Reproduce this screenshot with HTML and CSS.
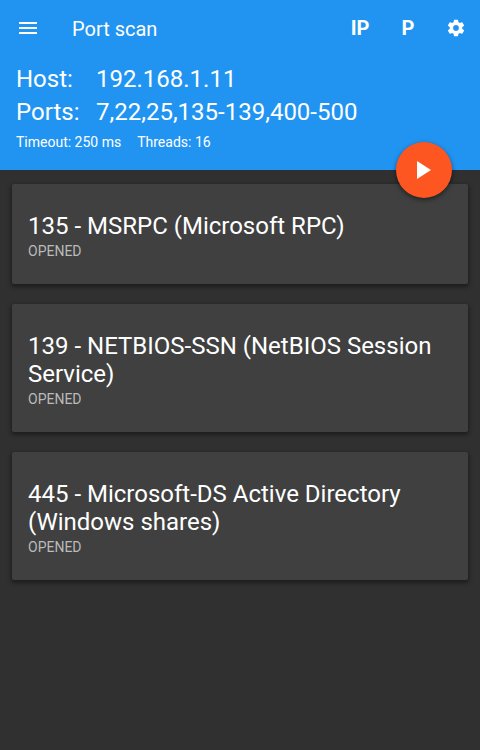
FILE: index.html
```html
<!DOCTYPE html>
<html lang="en">
<head>
<meta charset="utf-8">
<meta name="viewport" content="width=device-width, initial-scale=1">
<title>Port scan</title>
<link rel="stylesheet" href="styles.css">
</head>
<body>
<header class="header">
  <div class="toolbar">
    <button class="icon-button menu" aria-label="Open menu">
      <svg width="24" height="24" viewBox="0 0 24 24" fill="currentColor"><path d="M3 18h18v-2H3v2zm0-5h18v-2H3v2zm0-7v2h18V6H3z"/></svg>
    </button>
    <h1 class="title">Port scan</h1>
    <button class="icon-button action">IP</button>
    <button class="icon-button action">P</button>
    <button class="icon-button action" aria-label="Settings">
      <svg width="20" height="20" viewBox="0 0 24 24" fill="currentColor"><path d="M19.43 12.98c.04-.32.07-.64.07-.98s-.03-.66-.07-.98l2.11-1.65c.19-.15.24-.42.12-.64l-2-3.46c-.12-.22-.39-.3-.61-.22l-2.49 1c-.52-.4-1.08-.73-1.69-.98l-.38-2.65C14.46 2.18 14.25 2 14 2h-4c-.25 0-.46.18-.49.42l-.38 2.65c-.61.25-1.17.59-1.69.98l-2.49-1c-.23-.09-.49 0-.61.22l-2 3.46c-.13.22-.07.49.12.64l2.11 1.65c-.04.32-.07.65-.07.98s.03.66.07.98l-2.11 1.65c-.19.15-.24.42-.12.64l2 3.46c.12.22.39.3.61.22l2.49-1c.52.4 1.08.73 1.69.98l.38 2.65c.03.24.24.42.49.42h4c.25 0 .46-.18.49-.42l.38-2.65c.61-.25 1.17-.59 1.69-.98l2.49 1c.23.09.49 0 .61-.22l2-3.46c.12-.22.07-.49-.12-.64l-2.11-1.65zM12 15.5c-1.93 0-3.5-1.57-3.5-3.5s1.57-3.5 3.5-3.5 3.5 1.57 3.5 3.5-1.57 3.5-3.5 3.5z"/></svg>
    </button>
  </div>
  <dl class="target">
    <dt>Host:</dt><dd>192.168.1.11</dd>
    <dt>Ports:</dt><dd>7,22,25,135-139,400-500</dd>
  </dl>
  <p class="options"><span>Timeout: 250 ms</span><span>Threads: 16</span></p>
  <button class="fab" aria-label="Start scan">
    <svg width="28" height="28" viewBox="0 0 28 28" fill="currentColor"><path d="M7 5v18l14-9z"/></svg>
  </button>
</header>
<main class="results">
  <article class="card"><h2>135 - MSRPC (Microsoft RPC)</h2><p>OPENED</p></article>
  <article class="card"><h2>139 - NETBIOS-SSN (NetBIOS Session Service)</h2><p>OPENED</p></article>
  <article class="card"><h2>445 - Microsoft-DS Active Directory (Windows shares)</h2><p>OPENED</p></article>
</main>
</body>
</html>
```

FILE: styles.css
```css
* {
  box-sizing: border-box;
}

body {
  margin: 0;
  min-height: 100vh;
  background: #303030;
  color: #fff;
  font-family: Roboto, "Liberation Sans", sans-serif;
}

h1, h2, p, dl, dd {
  margin: 0;
  font-weight: 400;
}

button {
  padding: 0;
  border: 0;
  background: none;
  color: inherit;
  font: inherit;
  cursor: pointer;
}

.header {
  position: relative;
  padding-bottom: 19px;
  background: #2194f1;
}

.toolbar {
  display: flex;
  align-items: center;
  height: 56px;
}

.icon-button {
  display: flex;
  align-items: center;
  justify-content: center;
  width: 48px;
  height: 48px;
}

.menu {
  width: 56px;
}

.title {
  flex: 1;
  padding: 2px 0 0 16px;
  font-size: 20px;
  line-height: 24px;
}

.action {
  font-size: 20px;
  font-weight: 700;
}

.target {
  display: grid;
  grid-template-columns: 80px 1fr;
  row-gap: 1px;
  margin-top: 7px;
  padding: 0 16px;
  font-size: 24px;
  line-height: 32px;
}

.options {
  display: flex;
  gap: 16px;
  margin-top: 5px;
  padding: 0 16px;
  font-size: 14px;
  line-height: 18px;
}

.fab {
  position: absolute;
  right: 28px;
  bottom: -28px;
  display: flex;
  align-items: center;
  justify-content: center;
  width: 56px;
  height: 56px;
  border-radius: 50%;
  background: #fd5621;
  box-shadow: 0 2px 5px rgba(0, 0, 0, 0.5);
}

.results {
  display: flex;
  flex-direction: column;
  gap: 20px;
  padding: 14px 12px;
}

.card {
  padding: 28px 16px 24px;
  border-radius: 2px;
  background: #404040;
  box-shadow: 0 2px 4px 1px rgba(0, 0, 0, 0.4);
}

.card h2 {
  font-size: 24px;
  line-height: 28px;
}

.card p {
  margin-top: 2px;
  color: #bababa;
  font-size: 14px;
  line-height: 18px;
}
```
